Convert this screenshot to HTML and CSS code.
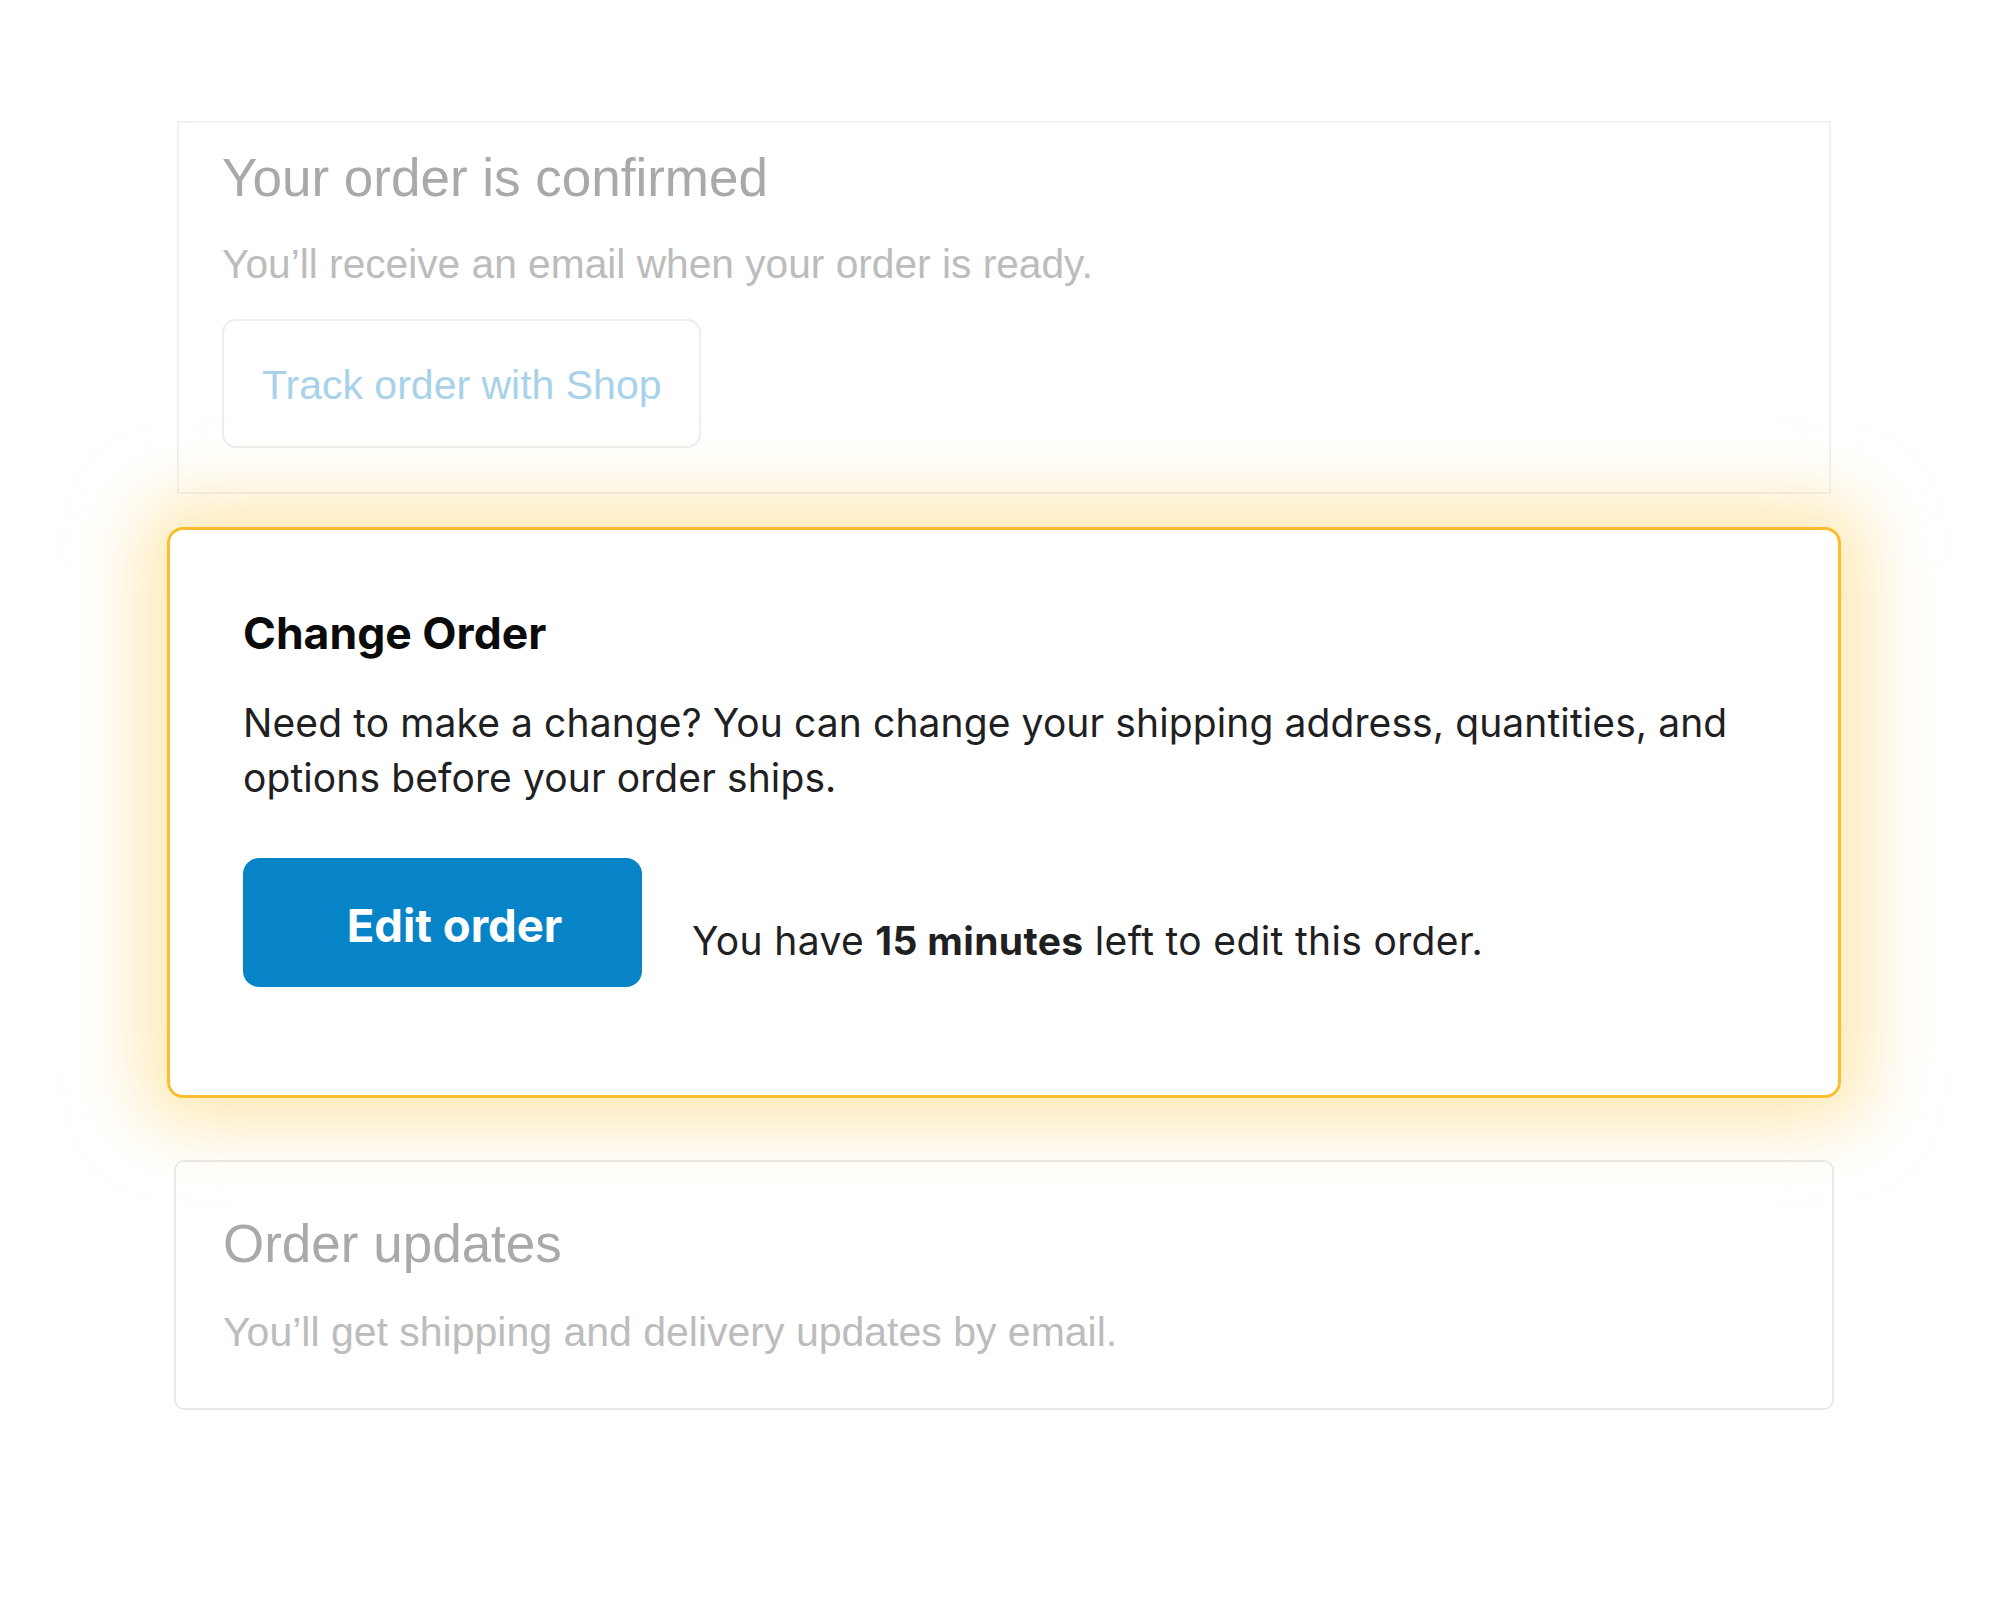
FILE: index.html
```html
<!DOCTYPE html>
<html lang="en">
<head>
<meta charset="utf-8">
<title>Change Order</title>
<link rel="stylesheet" href="styles.css">
</head>
<body>
<div class="page">
  <section class="card card-faded card-top">
    <h2 class="faded-title">Your order is confirmed</h2>
    <p class="faded-text">You’ll receive an email when your order is ready.</p>
    <a class="track-btn">Track order with Shop</a>
  </section>

  <section class="card-main">
    <h2 class="main-title">Change Order</h2>
    <p class="main-text">Need to make a change? You can change your shipping address, quantities, and options before your order ships.</p>
    <div class="action-row">
      <a class="edit-btn">Edit order</a>
      <p class="time-left">You have <strong>15 minutes</strong> left to edit this order.</p>
    </div>
  </section>

  <section class="card card-faded card-bottom">
    <h2 class="faded-title">Order updates</h2>
    <p class="faded-text">You’ll get shipping and delivery updates by email.</p>
  </section>
</div>
</body>
</html>
```

FILE: styles.css
```css
* { box-sizing: border-box; }
html, body { margin: 0; padding: 0; background: #ffffff; }
body { font-family: "Liberation Sans", Arial, sans-serif; }

.page {
  width: 1680px;
  margin-left: 164px;
  padding-top: 121px;
  padding-bottom: 100px;
}

.card {
  background: #ffffff;
  margin: 0 auto;
}

.card-top {
  width: 1654px;
  border: 2px solid #eef0f3;
  padding: 24px 42px 44px 43px;
}

.card-bottom {
  width: 1660px;
  margin-top: 62px;
  border: 2px solid #e9e9e9;
  border-radius: 10px;
  padding: 51px 46px 52px 47px;
}

.faded-title {
  margin: 0;
  font-family: "Liberation Sans", Arial, sans-serif;
  font-weight: 400;
  font-size: 53px;
  line-height: 61px;
  color: #a9a9a9;
}

.faded-text {
  margin: 32px 0 0 0;
  font-size: 40.7px;
  line-height: 48px;
  color: #bcbcbc;
}

.card-bottom .faded-text {
  margin-top: 34px;
  font-size: 41px;
}

.track-btn {
  display: inline-block;
  margin-top: 31px;
  padding: 40px 37px 37px 38px;
  border: 2px solid #eceef0;
  border-radius: 14px;
  font-size: 41px;
  line-height: 48px;
  color: #a8d2ea;
  text-decoration: none;
}

.card-main {
  position: relative;
  z-index: 1;
  width: 1674px;
  margin: 33px auto 0 auto;
  background: #ffffff;
  border: 3px solid #fbbd2e;
  border-radius: 16px;
  padding: 77px 73px 108px 73px;
  box-shadow: 0 0 70px 26px rgba(252, 210, 110, 0.52);
  font-family: Inter, "Noto Sans", sans-serif;
}

.main-title {
  margin: 0;
  font-size: 44.5px;
  line-height: 53px;
  font-weight: 700;
  color: #0b0b0b;
}

.main-text {
  margin: 35px 0 0 0;
  font-size: 39px;
  line-height: 55px;
  font-weight: 400;
  color: #1f2022;
  letter-spacing: 0.1px;
}

.action-row {
  display: flex;
  align-items: flex-start;
  margin-top: 53px;
}

.edit-btn {
  display: flex;
  align-items: center;
  justify-content: center;
  width: 399px;
  height: 129px;
  padding: 5px 81px 0 105px;
  border-radius: 16px;
  background: #0784c7;
  color: #ffffff;
  font-size: 45.5px;
  font-weight: 700;
  text-decoration: none;
  white-space: nowrap;
}

.time-left {
  margin: 55px 0 0 50px;
  font-size: 39px;
  line-height: 55px;
  color: #1f2022;
  letter-spacing: 0.35px;
}

.time-left strong {
  font-weight: 700;
}
```
